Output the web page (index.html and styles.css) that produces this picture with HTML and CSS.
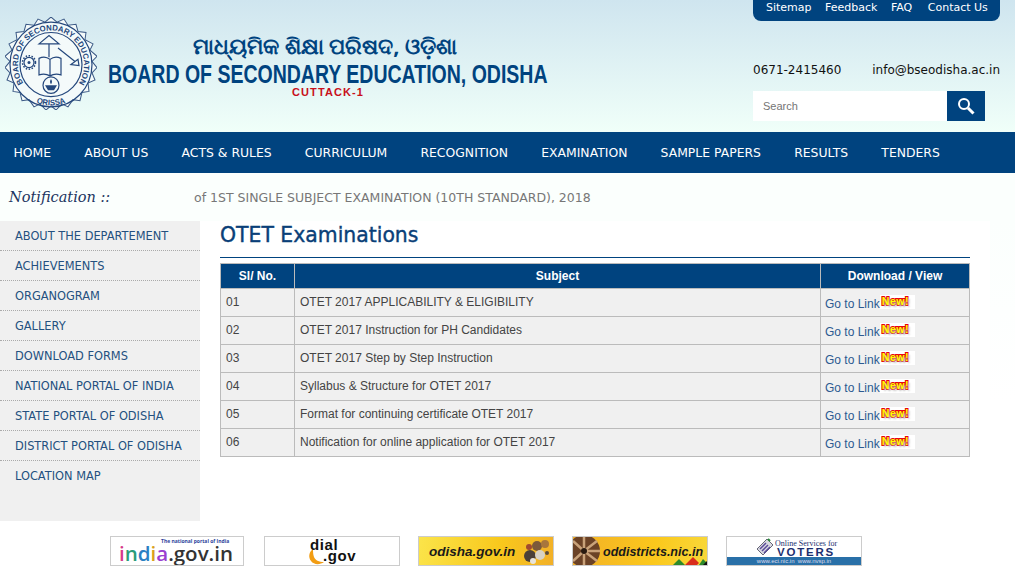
FILE: index.html
```html
<!DOCTYPE html>
<html lang="en">
<head>
<meta charset="UTF-8">
<meta name="viewport" content="width=device-width, initial-scale=1.0">
<title>OTET Examinations</title>
<link rel="stylesheet" href="styles.css">
</head>
<body>
<header class="header">
    <svg class="seal" width="92" height="93" viewBox="4 1 92 90" preserveAspectRatio="none">
        <defs>
            <path id="sealTop" d="M23 66a33 33 0 1 1 54 0"/>
            <path id="sealBottom" d="M28 80a40 40 0 0 0 44 0"/>
        </defs>
        <polygon class="seal-star" points="50,1 56,6 63,3 67,9 75,8 77,15 85,16 84,23 92,27 89,33 96,39 91,44 96,50 91,55 94,62 87,65 88,73 81,74 79,82 72,81 67,88 61,85 55,91 50,87 45,91 39,85 33,88 28,81 21,82 19,74 12,73 13,65 6,62 9,55 4,50 9,44 4,39 11,33 8,27 16,23 15,16 23,15 25,8 33,9 37,3 44,6"/>
        <circle class="seal-line" cx="50" cy="47" r="41"/>
        <circle class="seal-line" cx="50" cy="47" r="31"/>
        <text class="seal-text"><textPath href="#sealTop" startOffset="50%" text-anchor="middle">BOARD OF SECONDARY EDUCATION</textPath></text>
        <text class="seal-text"><textPath href="#sealBottom" startOffset="50%" text-anchor="middle">ORISSA</textPath></text>
        <path class="seal-draw" d="M38 27l10-8 10 8zM48 27v13"/>
        <path class="seal-draw" d="M57 31l17 13M70 47l7-5 1 6z"/>
        <path class="seal-draw" d="M38 41q6-3 11 1q5-4 11-1v16q-6-2-11 1q-5-3-11-1zM49 42v16"/>
        <circle class="seal-draw" cx="28" cy="45" r="5"/>
        <circle class="seal-teeth" cx="28" cy="45" r="6.500"/>
        <circle class="seal-dot" cx="28" cy="45" r="1.500"/>
        <circle class="seal-draw" cx="50" cy="67" r="8"/>
        <path class="seal-dot" d="M44 67h12l-3 5h-6zM50 61q2 3 0 5q-2-2 0-5z"/>
    </svg>
    <div class="title">
        <div class="title-or">ମାଧ୍ୟମିକ ଶିକ୍ଷା ପରିଷଦ, ଓଡ଼ିଶା</div>
        <div class="title-en"><span>BOARD OF SECONDARY EDUCATION, ODISHA</span></div>
        <div class="title-city">CUTTACK-1</div>
    </div>
    <div class="header-right">
        <div class="top-links">
            <a>Sitemap</a><a>Feedback</a><a>FAQ</a><a>Contact Us</a>
        </div>
        <div class="contact">
            <span>0671-2415460</span><span>info@bseodisha.ac.in</span>
        </div>
        <div class="search">
            <input type="text" placeholder="Search">
            <button aria-label="Search">
                <svg width="18" height="18" viewBox="0 0 18 18"><circle cx="7" cy="7" r="5" fill="none" stroke="#fff" stroke-width="2"/><path d="M11 11l5.500 5.500" stroke="#fff" stroke-width="3"/></svg>
            </button>
        </div>
    </div>
</header>

<nav class="nav">
    <a>HOME</a><a>ABOUT US</a><a>ACTS &amp; RULES</a><a>CURRICULUM</a><a>RECOGNITION</a><a>EXAMINATION</a><a>SAMPLE PAPERS</a><a>RESULTS</a><a>TENDERS</a>
</nav>

<div class="notice">
    <div class="notice-label">Notification ::</div>
    <div class="notice-text">of 1ST SINGLE SUBJECT EXAMINATION (10TH STANDARD), 2018</div>
</div>

<div class="content">
    <ul class="side">
        <li>ABOUT THE DEPARTEMENT</li>
        <li>ACHIEVEMENTS</li>
        <li>ORGANOGRAM</li>
        <li>GALLERY</li>
        <li>DOWNLOAD FORMS</li>
        <li>NATIONAL PORTAL OF INDIA</li>
        <li>STATE PORTAL OF ODISHA</li>
        <li>DISTRICT PORTAL OF ODISHA</li>
        <li>LOCATION MAP</li>
    </ul>
    <main class="main">
        <h1>OTET Examinations</h1>
        <table>
            <tr><th class="col-no">Sl/ No.</th><th>Subject</th><th class="col-link">Download / View</th></tr>
            <tr><td>01</td><td>OTET 2017 APPLICABILITY &amp; ELIGIBILITY</td><td class="link"><a>Go to Link</a><span class="new">New!</span></td></tr>
            <tr><td>02</td><td>OTET 2017 Instruction for PH Candidates</td><td class="link"><a>Go to Link</a><span class="new">New!</span></td></tr>
            <tr><td>03</td><td>OTET 2017 Step by Step Instruction</td><td class="link"><a>Go to Link</a><span class="new">New!</span></td></tr>
            <tr><td>04</td><td>Syllabus &amp; Structure for OTET 2017</td><td class="link"><a>Go to Link</a><span class="new">New!</span></td></tr>
            <tr><td>05</td><td>Format for continuing certificate OTET 2017</td><td class="link"><a>Go to Link</a><span class="new">New!</span></td></tr>
            <tr><td>06</td><td>Notification for online application for OTET 2017</td><td class="link"><a>Go to Link</a><span class="new">New!</span></td></tr>
        </table>
    </main>
</div>

<footer class="logos">
    <div class="logo logo-india"><small>The national portal of India</small><b><i class="c1">i</i><i class="c2">n</i><i class="c3">d</i><i class="c4">i</i><i class="c5">a</i>.gov.in</b></div>
    <div class="logo logo-dial">
        <svg class="dial-moon" width="18" height="16" viewBox="0 0 18 16"><path d="M5 0C1 3 0 8 3 12c3 4 9 4 13 1C11 13 7 11 6 8 5 5 5 3 5 0z" fill="#f29d13"/></svg>
        <b class="dial-top">dial</b><b class="dial-bottom">.gov</b>
    </div>
    <div class="logo logo-yellow logo-odisha">
        <b>odisha.gov.in</b>
        <svg class="odisha-art" width="30" height="28" viewBox="0 0 30 28">
            <circle cx="9" cy="19" r="6" fill="#4a4038"/><circle cx="16" cy="9" r="5" fill="#7c5a3a"/><circle cx="24" cy="7" r="4" fill="#a8763c"/><circle cx="19" cy="18" r="5" fill="#d8d2c4"/><circle cx="8" cy="10" r="3" fill="#a04a30"/><circle cx="12" cy="24" r="3" fill="#e8e4da"/><circle cx="26" cy="16" r="2" fill="#5a4a3a"/>
        </svg>
    </div>
    <div class="logo logo-yellow logo-dist">
        <svg class="dist-wheel" width="30" height="28" viewBox="0 0 30 28">
            <circle cx="11" cy="14" r="16" fill="#6b4226"/>
            <path d="M11 14L11-2M11 14L24 4M11 14L27 14M11 14L24 24M11 14L11 30M11 14L0 24M11 14L0 4" stroke="#c9a27a" stroke-width="2.500"/>
            <circle cx="11" cy="14" r="3" fill="#2a1a10"/>
        </svg>
        <b>oddistricts.nic.in</b>
        <svg class="dist-art" width="34" height="12" viewBox="0 0 34 12">
            <path d="M0 12l6-6 6 6z" fill="#2d8a2a"/><path d="M12 12l8-8 6 6-2 2z" fill="#d92c1c"/><path d="M26 12l4-6 4 4v2z" fill="#2d8a2a"/><path d="M30 12l4-4v4z" fill="#111"/>
        </svg>
    </div>
    <div class="logo logo-voters">
        <svg class="voters-icon" width="18" height="20" viewBox="0 0 18 20">
            <path d="M1 11L11 1l6 6-10 10z" fill="#d8d8e0" stroke="#667" stroke-width="1"/>
            <path d="M4 11l6-6M6 13l6-6M8 15l6-6" stroke="#5a4a9a" stroke-width="1.500"/>
            <path d="M12 1l2 2" stroke="#2a8a3a" stroke-width="2"/>
        </svg>
        <em>Online Services for</em><b>VOTERS</b><span>www.eci.nic.in &nbsp;www.nvsp.in</span>
    </div>
</footer>
</body>
</html>
```

FILE: styles.css
```css
body {
    font-family: "Liberation Sans", Arial, sans-serif;
    margin: 0;
    padding: 0;
    background-color: #fff;
    overflow: hidden;
}
a {
    color: inherit;
    text-decoration: none;
}

.header {
    height: 132px;
    display: flex;
    background: linear-gradient(#cfe5ef, #f0fff9);
    box-sizing: border-box;
    padding-left: 5px;
}
.seal {
    margin-top: 17px;
    flex: none;
}
.seal-star {
    fill: #f4fafa;
    stroke: #3c5a86;
    stroke-width: 1;
}
.seal-line, .seal-draw {
    fill: none;
    stroke: #24477c;
    stroke-width: 1.2;
}
.seal-teeth {
    fill: none;
    stroke: #24477c;
    stroke-width: 1.500;
    stroke-dasharray: 1.500 1.500;
}
.seal-dot {
    fill: #24477c;
}
.seal-text {
    font-size: 7.8px;
    font-weight: bold;
    fill: #24477c;
}
.title {
    width: 440px;
    margin-left: 11px;
    padding-top: 30px;
    text-align: center;
    flex: none;
}
.title-or {
    font-family: "Noto Sans", sans-serif;
    font-size: 22px;
    line-height: 31px;
    font-weight: bold;
    color: #00437f;
    padding-right: 6px;
}
.title-en {
    display: flex;
    justify-content: center;
    font-weight: bold;
    font-size: 25px;
    line-height: 26px;
    color: #00437f;
    white-space: nowrap;
}
.title-en span {
    flex: none;
    transform: scaleX(0.78);
}
.title-city {
    font-weight: bold;
    font-size: 11px;
    line-height: 12px;
    letter-spacing: 1.1px;
    color: #c8101a;
    margin-top: -1px;
}
.header-right {
    margin-left: 205px;
    width: 247px;
}
.top-links {
    height: 21px;
    background-color: #00437f;
    border-radius: 0 0 8px 8px;
    color: #fff;
    font-family: "DejaVu Sans", sans-serif;
    font-size: 11px;
    line-height: 16px;
    display: flex;
    gap: 13.500px;
    padding-left: 13px;
    box-sizing: border-box;
    white-space: nowrap;
}
.top-links a:last-child {
    margin-left: 2px;
}
.contact {
    margin-top: 40px;
    display: flex;
    justify-content: space-between;
    font-family: "DejaVu Sans", sans-serif;
    font-size: 12px;
    line-height: 18px;
    color: #111;
    white-space: nowrap;
}
.search {
    margin-top: 12px;
    display: flex;
    width: 232px;
    height: 30px;
}
.search input {
    flex: 1;
    min-width: 0;
    border: none;
    background-color: #fff;
    padding: 0 10px;
    font-family: "Liberation Sans", sans-serif;
    font-size: 11px;
}
.search button {
    width: 38px;
    border: none;
    padding: 0;
    background-color: #00437f;
    display: flex;
    align-items: center;
    justify-content: center;
}

.nav {
    height: 41px;
    background-color: #00437f;
    display: flex;
    gap: 33.200px;
    padding-left: 13.500px;
    color: #fff;
    font-family: "DejaVu Sans", sans-serif;
    font-size: 12.4px;
    line-height: 42px;
    white-space: nowrap;
}

.notice {
    height: 48px;
    display: flex;
    align-items: center;
    background-color: #fbfffd;
}
.notice-label {
    width: 194px;
    padding-left: 9px;
    box-sizing: border-box;
    font-family: "DejaVu Serif", serif;
    font-style: italic;
    font-size: 14.5px;
    color: #1c3560;
}
.notice-text {
    font-family: "DejaVu Sans", sans-serif;
    font-size: 12.5px;
    color: #777;
    white-space: nowrap;
}

.content {
    display: flex;
    height: 300px;
    background: linear-gradient(#fbfffd, #fff 60%);
}
.side {
    list-style: none;
    margin: 0;
    padding: 0;
    width: 200px;
    background-color: #f0f0f0;
    flex: none;
}
.side li {
    height: 30px;
    box-sizing: border-box;
    padding-left: 15px;
    border-bottom: 1px dotted #aaa;
    font-family: "DejaVu Sans", sans-serif;
    font-size: 11.4px;
    line-height: 30px;
    color: #24507f;
    white-space: nowrap;
}
.side li:last-child {
    border-bottom: none;
}
.main {
    width: 750px;
    padding: 0 20px;
    background-color: #fff;
}
h1 {
    margin: 0;
    height: 36px;
    border-bottom: 1px solid #00437f;
    font-family: "DejaVu Sans", sans-serif;
    font-weight: normal;
    font-size: 20.4px;
    line-height: 28px;
    color: #0a3f78;
    -webkit-text-stroke: 0.4px #0a3f78;
}
table {
    margin-top: 5px;
    width: 750px;
    border-collapse: collapse;
    table-layout: fixed;
    font-size: 12px;
}
th, td {
    border: 1px solid #bbb;
    padding: 0 5px;
    text-align: left;
    box-sizing: border-box;
}
th {
    height: 25px;
    background-color: #00437f;
    color: #fff;
    text-align: center;
    padding: 0;
}
.col-no {
    width: 74px;
}
.col-link {
    width: 149px;
}
td {
    height: 28px;
    background-color: #f0f0f0;
    color: #444;
    vertical-align: top;
    padding-top: 6px;
}
td.link {
    color: #2c5a91;
    padding-top: 8px;
    padding-left: 4px;
    white-space: nowrap;
}
.new {
    display: inline-block;
    vertical-align: top;
    margin-top: -2px;
    padding: 0 6px 0 2px;
    height: 14px;
    background-color: #fff;
    font-size: 10.5px;
    font-weight: bold;
    line-height: 12px;
    letter-spacing: 0.6px;
    color: #ff0;
    -webkit-text-stroke: 2px #e8000d;
    paint-order: stroke fill;
    text-shadow: 2px 2px 2px #bbb;
}

.logos {
    display: flex;
    gap: 18px;
    padding: 15px 0 0 110px;
}
.logo {
    width: 134px;
    height: 28px;
    border: 1px solid #ccc;
    overflow: hidden;
    flex: none;
    position: relative;
    text-align: center;
}
.logo-india {
    width: 132px;
    margin-right: 2px;
    text-align: left;
    font-family: "Open Sans", sans-serif;
}
.logo-india small {
    display: block;
    font-size: 5px;
    line-height: 6px;
    font-weight: bold;
    color: #2d3f9b;
    padding-left: 50px;
    margin-top: 1px;
}
.logo-india b {
    display: block;
    font-size: 20.5px;
    font-weight: 600;
    line-height: 18px;
    color: #333;
    padding-left: 8px;
}
.logo-india i {
    font-style: normal;
}
.c1 { color: #d63a8a; }
.c2 { color: #2a9c7a; }
.c3 { color: #2b7fc3; }
.c4 { color: #d9a11c; }
.c5 { color: #9a3fd0; }
.dial-moon {
    position: absolute;
    left: 43px;
    top: 12px;
}
.dial-top, .dial-bottom {
    position: absolute;
    font-size: 15px;
    font-weight: 900;
    line-height: 14px;
    letter-spacing: 0.6px;
    color: #111;
}
.dial-top {
    left: 45px;
    top: 1px;
}
.dial-bottom {
    left: 58px;
    top: 12px;
}
.logo-yellow {
    background: linear-gradient(100deg, #fbe44a, #f8c81c 60%, #f2b028);
    font-style: italic;
    font-size: 13.5px;
    line-height: 30px;
    color: #1a1a1a;
}
.logo-odisha {
    text-align: left;
    padding-left: 10px;
    width: 124px;
}
.odisha-art {
    position: absolute;
    right: 2px;
    top: 0;
}
.logo-dist {
    text-align: left;
    padding-left: 30px;
    width: 104px;
    font-size: 12.5px;
    background: linear-gradient(100deg, #f2b028, #fbc81c 60%, #f8d83a);
}
.dist-wheel {
    position: absolute;
    left: 0;
    top: 0;
}
.dist-art {
    position: absolute;
    right: 0;
    bottom: 0;
}
.logo-voters {
    font-size: 8px;
    line-height: 9px;
    color: #1c2f70;
    text-align: left;
}
.voters-icon {
    position: absolute;
    left: 29px;
    top: 1px;
}
.logo-voters em {
    display: block;
    font-family: "Liberation Serif", serif;
    font-style: normal;
    font-size: 8px;
    padding-left: 48px;
    margin-top: 2px;
}
.logo-voters b {
    display: block;
    font-size: 11.5px;
    letter-spacing: 1.8px;
    padding-left: 50px;
}
.logo-voters span {
    position: absolute;
    left: 0;
    right: 0;
    bottom: 0;
    height: 8px;
    line-height: 8px;
    font-size: 6px;
    text-align: center;
    background-color: #2970a8;
    color: #dde;
}
```
